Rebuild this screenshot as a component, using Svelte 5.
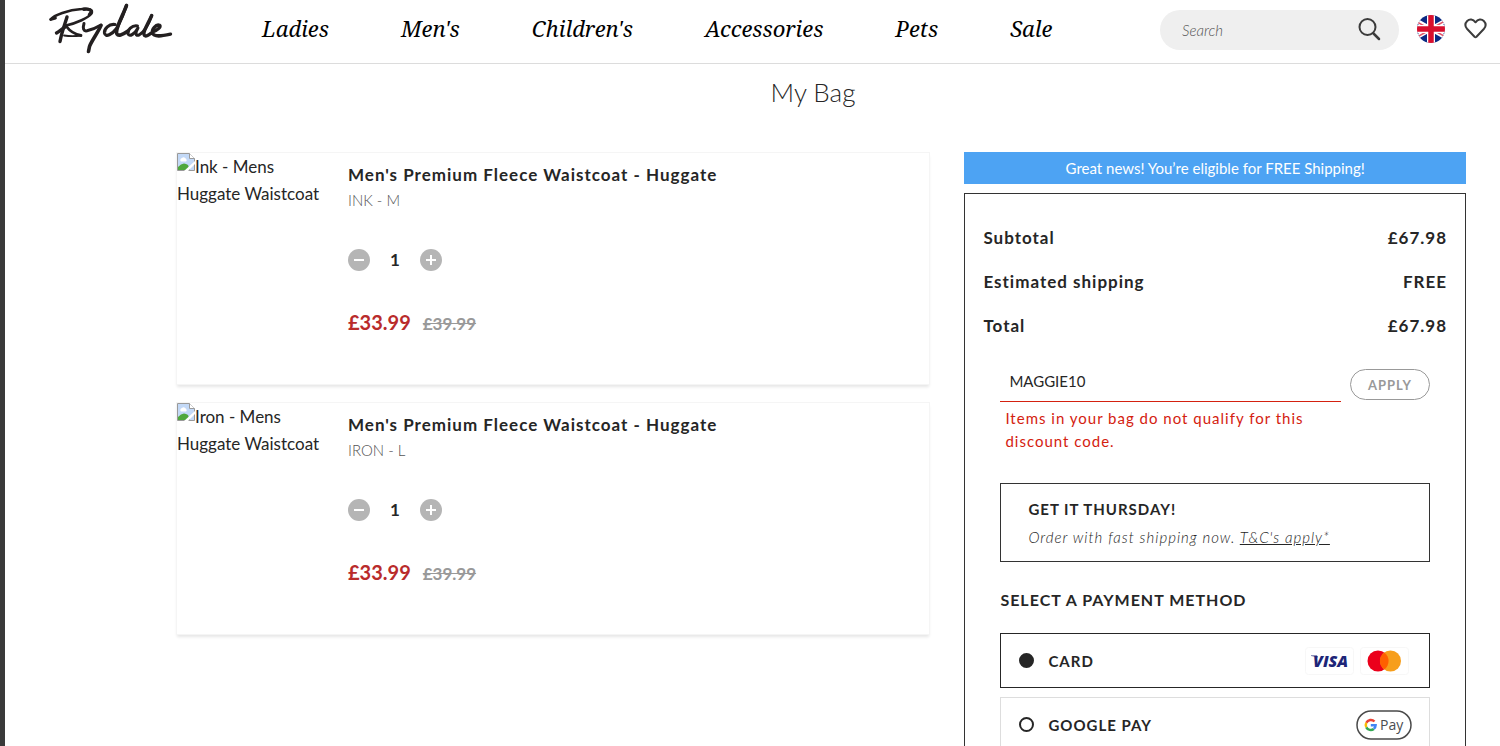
<script>
  const nav = ['Ladies', "Men's", "Children's", 'Accessories', 'Pets', 'Sale'];

  let items = $state([
    { id: 'ink', alt: 'Ink - Mens Huggate Waistcoat', name: "Men's Premium Fleece Waistcoat - Huggate", variant: 'INK - M', qty: 1, price: '£33.99', was: '£39.99' },
    { id: 'iron', alt: 'Iron - Mens Huggate Waistcoat', name: "Men's Premium Fleece Waistcoat - Huggate", variant: 'IRON - L', qty: 1, price: '£33.99', was: '£39.99' }
  ]);

  const totals = [
    ['Subtotal', '£67.98'],
    ['Estimated shipping', 'FREE'],
    ['Total', '£67.98']
  ];

  let code = $state('MAGGIE10');
  let method = $state('card');
</script>

<div class="page">
  <header>
    <a class="logo" href="#home" aria-label="Rydale">
      <svg width="126" height="56" viewBox="0 0 126 56" fill="none" stroke="#231f20" stroke-linecap="round" stroke-linejoin="round">
        <path stroke-width="2.600" d="M2.500 19.500C6 15 20 10 33.700 9C41 8.300 45.500 9.500 43.500 13.500C40 18 29 23 18 25.500" />
        <path stroke-width="3.400" d="M36 9.300C43 8.600 45 11 41.500 14.500" />
        <path stroke-width="2.800" d="M3 19.300L7.500 18.200" />
        <path stroke-width="3.400" d="M19 17C17 24 14 31 12 41.500" />
        <path stroke-width="3.400" d="M8.500 33C11 31.500 14 29 17 27" />
        <path stroke-width="2.800" d="M18 26C21 30 27 34.500 33 35.500" />
        <path stroke-width="1.800" d="M16 35.500C22 36.500 28 36.300 33 35.500" />
        <path stroke-width="3" d="M36 23.500C34.500 28.500 35.500 31.500 39 30.800C44 29.500 49 27.500 53 25" />
        <path stroke-width="3.600" d="M53 25.500C49 34 43 42 41.500 46.500L40.500 51.500" />
        <path stroke-width="3.200" d="M67 24.500C61 23.500 56 29 56.500 33C57.500 38 64 34.500 69 28C73 20 76 13 78.500 5.500" />
        <path stroke-width="3.600" d="M78.500 5.500C75 15 68.500 26 68.500 32.500C69 37.500 75 34.500 80 31" />
        <path stroke-width="3" d="M89.500 26C84 25 79 30 80 34C81.500 37.500 87 33.500 90 28C87 33 87.500 36.500 91 35C97 32 101 23 103.700 15.500" />
        <path stroke-width="3.400" d="M103.700 15.500C100 24 95 31 96 34.500C97 38 101.500 34.500 104.500 32C110 30 113.500 26.500 111.500 25.300C108 24 103.500 29.500 104.500 33C106 37.500 114 36 122.500 34.200" />
      </svg>
    </a>
    <nav>
      {#each nav as item}
        <a href="#{item}">{item}</a>
      {/each}
    </nav>
    <form class="search" role="search" onsubmit={(e) => e.preventDefault()}>
      <input type="search" placeholder="Search" aria-label="Search" />
      <button type="submit" aria-label="Submit search">
        <svg width="24" height="24" viewBox="0 0 24 24" fill="none" stroke="#3c3c3c" stroke-width="2" stroke-linecap="round">
          <circle cx="10.500" cy="9" r="8" />
          <path d="M16.500 15.500L22 21" stroke-width="2.500" />
        </svg>
      </button>
    </form>
    <button class="flag" aria-label="United Kingdom">
      <svg width="28" height="28" viewBox="0 0 28 28">
        <clipPath id="disc"><circle cx="14" cy="14" r="14" /></clipPath>
        <g clip-path="url(#disc)">
          <path fill="#0b2a83" d="M0 0H28V28H0Z" />
          <path stroke="#fff" stroke-width="4.500" d="M-2 5L30 23M-2 23L30 5" />
          <path stroke="#e0566a" stroke-width="1.500" d="M0 7L9 12M0 22L9 17M28 6L19 11M28 21.500L19 16.500" />
          <path stroke="#fff" stroke-width="8" d="M14 0V28M0 14H28" />
          <path stroke="#d80f2e" stroke-width="5.500" d="M14 0V28M0 14H28" />
        </g>
      </svg>
    </button>
    <a class="heart" href="#wishlist" aria-label="Wishlist">
      <svg width="24" height="22" viewBox="0 0 24 22" fill="none" stroke="#3c3c3c" stroke-width="2" stroke-linejoin="round">
        <path d="M12.500 4.300C10 1 6.500 0.800 4.200 3C1.800 5.500 2 8.500 4.200 11L11.500 18.800Q12.500 19.700 13.500 18.800L20.800 11C23 8.500 23.200 5.500 20.800 3C18.500 0.800 15 1 12.500 4.300Z" />
      </svg>
    </a>
  </header>

  <main>
    <h1>My Bag</h1>
    <div class="columns">
      <section class="bag" aria-label="Items">
        {#each items as item (item.id)}
          <article>
            <div class="picture">
              <svg width="18" height="18" viewBox="0 0 18 18" aria-hidden="true">
                <path fill="#c3d9f7" stroke="#9a9a9a" d="M.5.5H12.500L17.500 5.500V17.500H.5Z" />
                <path fill="#fff" d="M4 8.500a2 2 0 0 1 1-3.500a2.500 2.500 0 0 1 4 1a1.500 1.500 0 0 1 0 2.500Z" />
                <path fill="#4fa83d" d="M1 17V14Q6 8 11 12L13 17Z" />
                <path fill="#fff" stroke="#9a9a9a" d="M12.500.5V5.500H17.500" />
                <path fill="#fff" d="M18 8V11L11 18H7Z" />
              </svg>{item.alt}
            </div>
            <div class="details">
              <h2>{item.name}</h2>
              <p class="variant">{item.variant}</p>
              <div class="quantity">
                <button aria-label="Decrease quantity" onclick={() => (item.qty = Math.max(1, item.qty - 1))}>
                  <svg width="22" height="22" viewBox="0 0 22 22"><circle cx="11" cy="11" r="11" fill="#b5b5b5" /><path stroke="#fff" stroke-width="2" d="M6 11H16" /></svg>
                </button>
                <span>{item.qty}</span>
                <button aria-label="Increase quantity" onclick={() => (item.qty += 1)}>
                  <svg width="22" height="22" viewBox="0 0 22 22"><circle cx="11" cy="11" r="11" fill="#b5b5b5" /><path stroke="#fff" stroke-width="2" d="M6 11H16M11 6V16" /></svg>
                </button>
              </div>
              <p class="price"><strong>{item.price}</strong><del>{item.was}</del></p>
            </div>
          </article>
        {/each}
      </section>

      <aside>
        <p class="banner">Great news! You’re eligible for FREE Shipping!</p>
        <div class="summary">
          <dl>
            {#each totals as [label, value]}
              <div><dt>{label}</dt><dd>{value}</dd></div>
            {/each}
          </dl>
          <div class="checkout">
            <form class="discount" onsubmit={(e) => e.preventDefault()}>
              <div class="field">
                <input type="text" aria-label="Discount code" aria-describedby="code-error" bind:value={code} />
                <p id="code-error">Items in your bag do not qualify for this discount code.</p>
              </div>
              <button>APPLY</button>
            </form>
            <div class="delivery">
              <h3>GET IT THURSDAY!</h3>
              <p>Order with fast shipping now. <a href="#terms">T&amp;C's apply*</a></p>
            </div>
            <h3 class="heading">SELECT A PAYMENT METHOD</h3>
            <div class="methods">
              <label class:chosen={method === 'card'}>
                <input type="radio" name="method" value="card" bind:group={method} />
                <span>CARD</span>
                <svg class="brand" width="49" height="28" viewBox="0 0 49 28" aria-label="Visa">
                  <rect x=".5" y=".5" width="48" height="27" rx="3" fill="#fff" stroke="#f7f7f7" />
                  <text x="8" y="20" font-family="Open Sans" font-size="16" font-weight="800" font-style="italic" fill="#1d2578">VISA</text>
                  <path fill="#1d2578" d="M6 8.500H12L13 10.500Q10 9 6 9Z" />
                </svg>
                <svg class="brand" width="49" height="28" viewBox="0 0 49 28" aria-label="Mastercard">
                  <rect x=".5" y=".5" width="48" height="27" rx="3" fill="#fff" stroke="#f7f7f7" />
                  <circle cx="18" cy="14" r="10.500" fill="#eb001b" />
                  <circle cx="30.500" cy="14" r="10.500" fill="#f79e1b" />
                  <path fill="#ff5f00" d="M24.250 5.500A10.500 10.500 0 0 1 24.250 22.500A10.500 10.500 0 0 1 24.250 5.500Z" />
                </svg>
              </label>
              <label class:chosen={method === 'google'}>
                <input type="radio" name="method" value="google" bind:group={method} />
                <span>GOOGLE PAY</span>
                <svg class="brand" width="56" height="30" viewBox="0 0 56 30" aria-label="Google Pay">
                  <rect x="1" y="1" width="54" height="28" rx="14" fill="#fff" stroke="#4a4a4a" stroke-width="1.500" />
                  <g fill="none" stroke-width="2.500">
                    <path stroke="#ea4335" d="M18.500 11.500A5 5 0 0 0 10.300 12.800" />
                    <path stroke="#fbbc04" d="M10.300 12.800A5 5 0 0 0 10.300 17.300" />
                    <path stroke="#34a853" d="M10.300 17.300A5 5 0 0 0 17.800 18.900" />
                    <path stroke="#4285f4" d="M17.800 18.900A5 5 0 0 0 19.600 15.200H14.800" />
                  </g>
                  <text x="24" y="20" font-family="Open Sans" font-size="14" font-weight="400" fill="#4a4d51">Pay</text>
                </svg>
              </label>
            </div>
          </div>
        </div>
      </aside>
    </div>
  </main>
</div>

<style>
  :global(body) {
    background: #fff;
    overflow: hidden;
  }
  .page {
    min-height: 100vh;
    box-sizing: border-box;
    border-left: 5px solid #3a3a3a;
    background: #fff;
    color: #262626;
    font-family: Lato, sans-serif;
  }
  h1, h2, h3, p, dl, dd {
    margin: 0;
  }
  svg {
    display: block;
  }
  button {
    padding: 0;
    border: 0;
    background: none;
    font-family: inherit;
    cursor: pointer;
  }
  header {
    display: flex;
    align-items: center;
    height: 63px;
    padding: 0 13px 0 43px;
    border-bottom: 1px solid #dcdcdc;
  }
  .logo {
    align-self: flex-start;
    margin-right: 88px;
  }
  nav {
    display: flex;
    gap: 72px;
    padding-bottom: 8px;
  }
  nav a {
    color: #000;
    font: italic 22px/28px "Noto Serif", "Droid Serif", "Liberation Serif", serif;
    text-decoration: none;
  }
  .search {
    display: flex;
    align-items: center;
    width: 239px;
    height: 40px;
    box-sizing: border-box;
    margin: 0 18px 4px auto;
    padding: 0 18px 0 22px;
    border-radius: 20px;
    background: #efefef;
  }
  .search input {
    flex: 1;
    min-width: 0;
    padding: 0;
    border: 0;
    outline: 0;
    background: none;
    font: italic 300 15px/20px Lato, sans-serif;
  }
  .search input::placeholder {
    color: #555;
  }
  .flag {
    margin: 0 18px 5px 0;
  }
  .heart {
    margin-bottom: 5px;
  }
  main {
    padding: 13px 34px 0 155px;
  }
  h1 {
    font-size: 26px;
    line-height: 30px;
    font-weight: 300;
    text-align: center;
  }
  .columns {
    display: grid;
    grid-template-columns: 3fr 2fr;
    gap: 35px;
    align-items: start;
    margin-top: 45px;
    padding-left: 17px;
  }
  .bag {
    display: grid;
    gap: 19px;
    padding-top: 1px;
  }
  article {
    display: grid;
    grid-template-columns: 150px 1fr;
    gap: 21px;
    min-height: 231px;
    box-shadow: 0 0 0 1px #f5f5f5, 0 3px 3px #e6e6e6;
  }
  .picture {
    font-size: 17px;
    line-height: 27px;
  }
  .picture svg {
    display: inline-block;
    vertical-align: top;
  }
  .details {
    padding-top: 9px;
  }
  h2 {
    margin-bottom: 1px;
    font-size: 17px;
    line-height: 25px;
    font-weight: 700;
    letter-spacing: 1px;
  }
  .variant {
    color: #555;
    font-size: 15px;
    line-height: 25px;
    font-weight: 300;
  }
  .quantity {
    display: flex;
    align-items: center;
    gap: 20px;
    margin: 36px 0;
    font-size: 17px;
    line-height: 22px;
    font-weight: 700;
  }
  .price {
    display: flex;
    align-items: baseline;
    gap: 12px;
    font-size: 20px;
    line-height: 30px;
  }
  .price strong {
    color: #b92b2b;
  }
  .price del {
    color: #999;
    font-size: 17px;
    font-weight: 700;
  }
  .banner {
    margin-bottom: 9px;
    background: #4da3f3;
    color: #fff;
    font-size: 15px;
    line-height: 32px;
    text-align: center;
  }
  .summary {
    padding: 22px 18px 40px;
    border: 1px solid #333;
  }
  dl div {
    display: flex;
    justify-content: space-between;
    font-size: 17px;
    line-height: 44px;
    font-weight: 700;
    letter-spacing: 1px;
  }
  .checkout {
    padding: 13px 17px 0;
  }
  .discount {
    display: flex;
    align-items: flex-start;
    gap: 9px;
  }
  .field {
    flex: 1;
  }
  .field input {
    display: block;
    width: 100%;
    height: 41px;
    box-sizing: border-box;
    padding: 0 9px;
    border: 0;
    border-bottom: 1px solid #d4210f;
    outline: 0;
    background: none;
    color: #262626;
    font: 15px/20px Lato, sans-serif;
  }
  .field p {
    padding: 5px 4px 0 5px;
    color: #d4210f;
    font-size: 15px;
    line-height: 23px;
    letter-spacing: 1px;
  }
  .discount button {
    width: 80px;
    height: 31px;
    margin-top: 8px;
    border: 1px solid #999;
    border-radius: 16px;
    color: #999;
    font-size: 13px;
    font-weight: 700;
    letter-spacing: 1px;
  }
  h3 {
    font-size: 15px;
    line-height: 28px;
    font-weight: 700;
    letter-spacing: 1px;
  }
  .heading {
    font-size: 16px;
  }
  .delivery {
    margin: 30px 0 24px;
    padding: 11px 27px 10px;
    border: 1px solid #333;
  }
  .delivery p {
    font-size: 15px;
    line-height: 28px;
    font-style: italic;
    font-weight: 300;
    letter-spacing: 1px;
  }
  .delivery a {
    color: inherit;
  }
  .methods {
    display: grid;
    gap: 9px;
    margin-top: 19px;
  }
  label {
    display: flex;
    align-items: center;
    height: 53px;
    padding: 0 17px 0 18px;
    border: 1px solid #ddd;
    font-size: 15px;
    font-weight: 700;
    letter-spacing: 1px;
  }
  label.chosen {
    border-color: #262626;
    padding-right: 20px;
  }
  label input {
    appearance: none;
    width: 15px;
    height: 15px;
    box-sizing: border-box;
    margin: 0 14px 0 0;
    border: 2px solid #262626;
    border-radius: 50%;
    background: #fff;
  }
  label input:checked {
    background: #262626;
  }
  label span {
    margin-right: auto;
  }
  .brand {
    letter-spacing: 0;
  }
  .brand + .brand {
    margin-left: 6px;
  }
</style>
